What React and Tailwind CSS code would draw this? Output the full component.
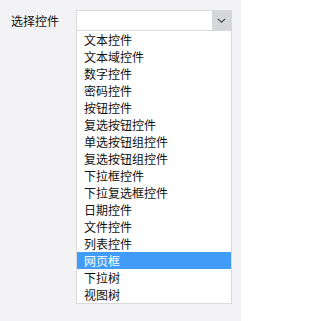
import React from "react";

const items = [
  "文本控件",
  "文本域控件",
  "数字控件",
  "密码控件",
  "按钮控件",
  "复选按钮控件",
  "单选按钮组控件",
  "复选按钮组控件",
  "下拉框控件",
  "下拉复选框控件",
  "日期控件",
  "文件控件",
  "列表控件",
  "网页框",
  "下拉树",
  "视图树",
];

export default function App() {
  return (
    <div
      className="w-[241px] h-[321px] bg-[#f3f3f5] pt-[10px] flex text-[12px] text-[#111111]"
      style={{ fontFamily: '"Noto Sans CJK SC", "Noto Sans", sans-serif' }}
    >
      <div className="w-[76px] pl-[11px] h-[21px] flex items-center leading-none">选择控件</div>
      <div className="w-[156px] flex flex-col">
        <div className="h-[21px] flex border border-[#d9d9dc] bg-white">
          <div className="flex-1"></div>
          <div className="w-[19px] bg-[#d6d7da] flex items-center justify-center">
            <svg width="9" height="5" viewBox="0 0 9 5">
              <path d="M0.8 0.8 L4.5 4.2 L8.2 0.8" fill="none" stroke="#444" strokeWidth="1.1" />
            </svg>
          </div>
        </div>
        <div className="bg-white border border-t-0 border-[#d9d9dc] flex flex-col">
          {items.map((t) => (
            <div
              key={t}
              className={
                "h-[17px] pl-[7px] flex items-center leading-none " +
                (t === "网页框" ? "bg-[#409cf8] text-white" : "")
              }
            >
              {t}
            </div>
          ))}
        </div>
      </div>
    </div>
  );
}
